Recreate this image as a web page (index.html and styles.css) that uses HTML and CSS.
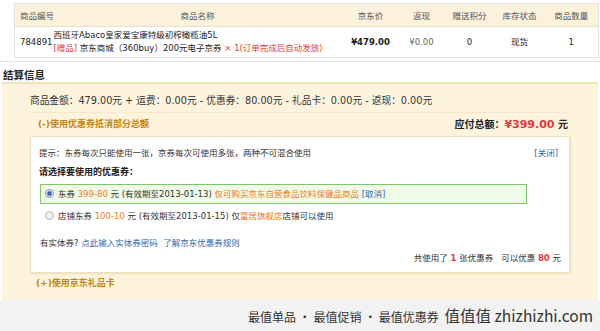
FILE: index.html
```html
<!DOCTYPE html>
<html lang="zh-CN">
<head>
    <meta charset="UTF-8">
    <title>结算信息</title>
    <link rel="stylesheet" href="styles.css">
</head>
<body>
    <table class="goods">
        <colgroup>
            <col class="w-id">
            <col class="w-name">
            <col class="w-price">
            <col class="w-back">
            <col class="w-score">
            <col class="w-stock">
            <col class="w-num">
        </colgroup>
        <thead>
            <tr>
                <th class="col-id">商品编号</th>
                <th>商品名称</th>
                <th>京东价</th>
                <th>返现</th>
                <th>赠送积分</th>
                <th>库存状态</th>
                <th>商品数量</th>
            </tr>
        </thead>
        <tbody>
            <tr>
                <td class="col-id">784891</td>
                <td class="col-name">
                    <div>西班牙Abaco皇家爱宝康特级初榨橄榄油5L</div>
                    <div><span class="gift">[赠品]</span> 京东商城（360buy）200元电子京券 <span class="red">× 1(订单完成后自动发放)</span></div>
                </td>
                <td><b>¥479.00</b></td>
                <td class="muted">¥0.00</td>
                <td>0</td>
                <td>现货</td>
                <td>1</td>
            </tr>
        </tbody>
    </table>
    <div class="dotted"></div>

    <h3 class="section-title">结算信息</h3>
    <div class="checkout">
        <div class="sum-line">商品金额：479.00元 + 运费：0.00元 - 优惠券：80.00元 - 礼品卡：0.00元 - 返现：0.00元</div>
        <div class="total-row">
            <a class="toggle">(-)使用优惠券抵消部分总额</a>
            <span class="total">应付总额：<em>¥399.00</em> 元</span>
        </div>

        <div class="coupon-box">
            <div class="tip-row">
                <span>提示：东券每次只能使用一张，京券每次可使用多张，两种不可混合使用</span>
                <a class="link">[关闭]</a>
            </div>
            <div class="choose">请选择要使用的优惠券：</div>
            <div class="coupon selected"><span class="radio on"></span>东券 <span class="orange">399-80</span> 元 (有效期至2013-01-13) <span class="orange">仅可购买京东自营食品饮料保健品商品</span> <a class="link">[取消]</a></div>
            <div class="coupon"><span class="radio"></span>店铺东券 <span class="orange">100-10</span> 元 (有效期至2013-01-15) 仅<span class="orange">富居旗舰店</span>店铺可以使用</div>
            <div class="entity">有实体券? <a class="link">点此输入实体券密码</a> &nbsp;<a class="link">了解京东优惠券规则</a></div>
            <div class="used">共使用了 <b class="red">1</b> 张优惠券 &nbsp; 可以优惠 <b class="red">80</b> 元</div>
        </div>

        <a class="toggle gift-card">(+)使用京东礼品卡</a>
    </div>

    <div class="footer">
        最值单品 · 最值促销 · 最值优惠券 <span class="brand">值值值 zhizhizhi.com</span>
    </div>
</body>
</html>
```

FILE: styles.css
```css
body {
    margin: 0;
    font-family: "DejaVu Sans", "Noto Sans CJK SC", sans-serif;
    font-size: 8.5px;
    color: #333;
    background: white;
}

a {
    text-decoration: none;
    cursor: pointer;
}

.red {
    color: #e4393c;
}

.orange {
    color: #f07a1e;
}

.link {
    color: #2e67b1;
}

.goods {
    margin: 3px 0 0 14px;
    width: 584px;
    table-layout: fixed;
    border-collapse: collapse;
    border: 1px solid #e3e3e3;
}

.w-id { width: 38px; }
.w-name { width: 290px; }
.w-price { width: 56px; }
.w-back { width: 46px; }
.w-score { width: 50px; }
.w-stock { width: 50px; }
.w-num { width: 54px; }

.goods th {
    height: 22px;
    padding: 0;
    background-color: #fcf2dc;
    font-weight: normal;
    color: #555;
    border-bottom: 1px solid #eadfc8;
    white-space: nowrap;
}

.goods td {
    height: 30px;
    padding: 0;
    text-align: center;
    line-height: 13px;
    white-space: nowrap;
    color: #222;
}

.goods .col-id {
    text-align: left;
    padding-left: 5px;
}

.goods td.col-name {
    text-align: left;
    padding-left: 1px;
}

.goods .muted {
    color: #666;
}

.gift {
    color: #e4393c;
}

.dotted {
    margin-top: 3px;
    border-top: 1px dotted #c8c8c8;
}

.section-title {
    margin: 7px 0 0 3px;
    font-size: 10.5px;
    line-height: 13px;
    font-weight: bold;
    color: #222;
}

.checkout {
    margin: 0 2px;
    padding: 8px 28px 9px 28px;
    background-color: #fef4dd;
    border-top: 2px solid #f3e2bb;
}

.sum-line {
    font-size: 9.7px;
    line-height: 18px;
    padding-bottom: 2px;
    border-bottom: 1px solid #f6e7c6;
}

.total-row {
    display: flex;
    justify-content: space-between;
    align-items: center;
    height: 20px;
    padding: 0 2px 0 8px;
}

.toggle {
    color: #c3860b;
    font-weight: bold;
    font-size: 9px;
}

.total {
    font-size: 10px;
    font-weight: bold;
    color: #222;
}

.total em {
    font-style: normal;
    color: #e4393c;
    font-size: 11px;
}

.coupon-box {
    margin-top: 3px;
    padding: 8px 8px 6px 8px;
    background: white;
    border: 1px solid #f0dfbc;
    box-shadow: 1px 1px 2px #ecdcbc;
}

.tip-row {
    display: flex;
    justify-content: space-between;
    line-height: 16px;
    padding-right: 3px;
}

.choose {
    margin-top: 3px;
    line-height: 16px;
    font-size: 9px;
    font-weight: bold;
    color: #222;
}

.coupon {
    height: 18px;
    line-height: 18px;
    margin: 4px 34px 0 1px;
    padding-left: 4px;
    border: 1px solid transparent;
    white-space: nowrap;
}

.coupon.selected {
    background-color: #effbe6;
    border-color: #7dc66c;
}

.coupon + .coupon {
    margin-top: 2px;
}

.radio {
    display: inline-block;
    vertical-align: -1px;
    width: 7px;
    height: 7px;
    margin-right: 4px;
    border-radius: 50%;
    border: 1px solid #b9b9b9;
    background: #f0f0f0;
}

.radio.on {
    border-color: #7b8fb3;
    background: radial-gradient(circle, #3b63a8 0 2px, #e7ecf5 2.5px);
}

.entity {
    margin: 9px 0 0 1px;
    line-height: 16px;
}

.used {
    text-align: right;
    line-height: 16px;
    margin-top: -1px;
}

.gift-card {
    display: block;
    margin: 2px 0 0 6px;
    line-height: 16px;
}

.footer {
    height: 31px;
    line-height: 31px;
    background-color: #f2f2f2;
    text-align: right;
    padding-right: 7px;
    font-family: "Noto Sans CJK SC", sans-serif;
    font-size: 12px;
    color: #333;
}

.brand {
    font-size: 15.5px;
    margin-left: 3px;
}
```
